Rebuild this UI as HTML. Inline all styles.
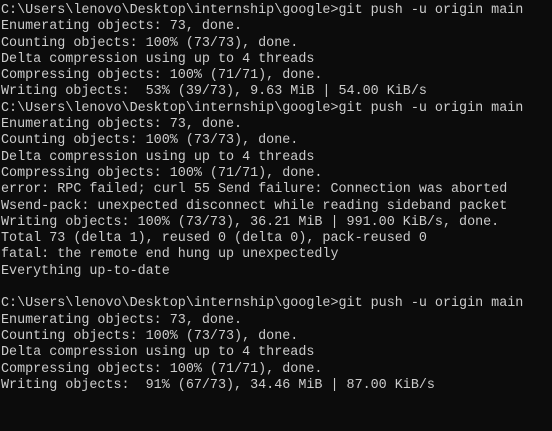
<!DOCTYPE html>
<html><head><style>
html,body{margin:0;padding:0;background:#0c0c0c;width:552px;height:431px;overflow:hidden}
pre{margin:0;padding:3px 0 0 1px;font-family:"Liberation Mono",monospace;font-size:13.4px;line-height:16.3px;color:#cccccc;white-space:pre}
</style></head><body><pre>C:\Users\lenovo\Desktop\internship\google>git push -u origin main
Enumerating objects: 73, done.
Counting objects: 100% (73/73), done.
Delta compression using up to 4 threads
Compressing objects: 100% (71/71), done.
Writing objects:  53% (39/73), 9.63 MiB | 54.00 KiB/s
C:\Users\lenovo\Desktop\internship\google>git push -u origin main
Enumerating objects: 73, done.
Counting objects: 100% (73/73), done.
Delta compression using up to 4 threads
Compressing objects: 100% (71/71), done.
error: RPC failed; curl 55 Send failure: Connection was aborted
Wsend-pack: unexpected disconnect while reading sideband packet
Writing objects: 100% (73/73), 36.21 MiB | 991.00 KiB/s, done.
Total 73 (delta 1), reused 0 (delta 0), pack-reused 0
fatal: the remote end hung up unexpectedly
Everything up-to-date

C:\Users\lenovo\Desktop\internship\google>git push -u origin main
Enumerating objects: 73, done.
Counting objects: 100% (73/73), done.
Delta compression using up to 4 threads
Compressing objects: 100% (71/71), done.
Writing objects:  91% (67/73), 34.46 MiB | 87.00 KiB/s</pre></body></html>
